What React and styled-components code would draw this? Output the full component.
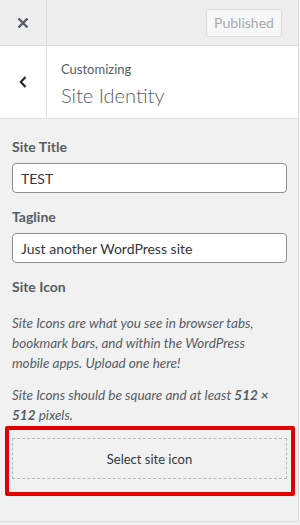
import React from 'react';
import styled, { createGlobalStyle } from 'styled-components';

const Global = createGlobalStyle`
	html, body {
		margin: 0;
		padding: 0;
		background: #f1f1f1;
	}
	body {
		font-family: 'Lato', 'Open Sans', sans-serif;
		color: #555d66;
	}
`;

const Panel = styled.div`
	width: 298px;
	height: 521px;
	background: #eee;
	border-right: 1px solid #ddd;
	border-bottom: 1px solid #ddd;
	display: flex;
	flex-direction: column;
	overflow: hidden;
`;

const TopBar = styled.div`
	height: 45px;
	display: flex;
	align-items: center;
	border-bottom: 1px solid #ddd;
	background: #eee;
`;

const IconButton = styled.button`
	width: 47px;
	height: 100%;
	border: 0;
	border-right: 1px solid #ddd;
	background: transparent;
	display: flex;
	align-items: center;
	justify-content: center;
	padding: 0;
	color: ${p => p.dark ? '#23282d' : '#555d66'};
`;

const Spacer = styled.div`
	flex: 1;
`;

const PublishedButton = styled.button`
	width: 76px;
	height: 28px;
	margin-right: 16px;
	border: 1px solid #dcdcde;
	border-radius: 3px;
	background: #f6f7f7;
	color: #a7aaad;
	font-family: 'Lato', sans-serif;
	font-size: 14px;
	padding: 0;
`;

const SectionHead = styled.div`
	height: 72px;
	display: flex;
	background: #fff;
	border-bottom: 1px solid #ddd;
`;

const HeadText = styled.div`
	display: flex;
	flex-direction: column;
	padding: 14px 0 0 14px;
`;

const Small = styled.span`
	font-size: 13px;
	line-height: 18px;
	color: #555d66;
`;

const Title = styled.h3`
	margin: 4px 0 0;
	font-size: 20px;
	line-height: 26px;
	font-weight: 300;
	color: #555d66;
`;

const Body = styled.div`
	padding: 18px 12px 0;
	display: flex;
	flex-direction: column;
	background: #f1f1f1;
	flex: 1;
`;

const Label = styled.label`
	font-size: 14px;
	font-weight: 700;
	line-height: 20px;
	color: #555d66;
	margin-bottom: ${p => p.gap || 6}px;
`;

const Input = styled.input`
	box-sizing: border-box;
	width: 275px;
	height: 30px;
	border: 1px solid #8c8f94;
	border-radius: 4px;
	background: #fff;
	padding: 0 8px;
	font-family: 'Lato', sans-serif;
	font-size: 14px;
	color: #32373c;
	margin-bottom: 14px;
	outline: none;
`;

const Desc = styled.p`
	max-width: 262px;
	margin: 0 0 ${p => p.last ? 0 : 12}px;
	font-size: 13.5px;
	line-height: 20px;
	font-style: italic;
	color: #555d66;
	strong {
		font-weight: 700;
	}
`;

const Highlight = styled.div`
	margin: 1px -9px 0 -7px;
	padding: 8px 5px 13px 3px;
	border: 4px solid #e30000;
	border-radius: 2px;
`;

const SelectBox = styled.button`
	box-sizing: border-box;
	width: 275px;
	height: 41px;
	border: 1px dashed #b4b9be;
	background: transparent;
	font-family: 'Lato', sans-serif;
	font-size: 13px;
	color: #32373c;
	padding: 0;
`;

export default function App() {
	return (
		<>
			<Global />
			<Panel>
				<TopBar>
					<IconButton>
						<svg width="12" height="12" viewBox="0 0 12 12">
							<path d="M1.5 1.5 L10.5 10.5 M10.5 1.5 L1.5 10.5" stroke="currentColor" strokeWidth="2.4" />
						</svg>
					</IconButton>
					<Spacer />
					<PublishedButton>Published</PublishedButton>
				</TopBar>
				<SectionHead>
					<IconButton dark>
						<svg width="8" height="12" viewBox="0 0 8 12">
							<path d="M6.5 1 L1.8 6 L6.5 11" stroke="currentColor" strokeWidth="2.2" fill="none" />
						</svg>
					</IconButton>
					<HeadText>
						<Small>Customizing</Small>
						<Title>Site Identity</Title>
					</HeadText>
				</SectionHead>
				<Body>
					<Label>Site Title</Label>
					<Input defaultValue="TEST" />
					<Label>Tagline</Label>
					<Input defaultValue="Just another WordPress site" />
					<Label gap={16}>Site Icon</Label>
					<Desc>Site Icons are what you see in browser tabs, bookmark bars, and within the WordPress mobile apps. Upload one here!</Desc>
					<Desc last>Site Icons should be square and at least <strong>512 ×</strong> <strong>512</strong> pixels.</Desc>
					<Highlight>
						<SelectBox>Select site icon</SelectBox>
					</Highlight>
				</Body>
			</Panel>
		</>
	);
}
